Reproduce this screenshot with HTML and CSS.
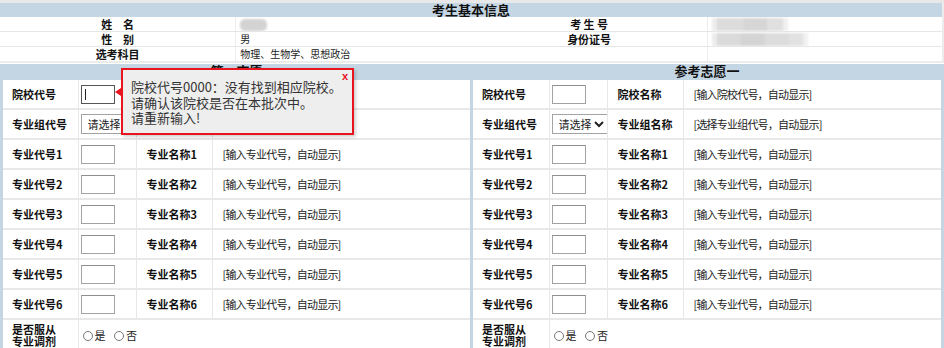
FILE: index.html
```html
<!DOCTYPE html>
<html lang="zh-CN">
<head>
  <meta charset="UTF-8">
  <title>考生基本信息</title>
  <link rel="stylesheet" href="styles.css">
</head>
<body>

  <table class="info">
    <tr>
      <th colspan="4" class="band">考生基本信息</th>
    </tr>
    <tr>
      <td class="key">姓　名</td>
      <td class="val"><span class="blur blur-name"></span></td>
      <td class="key">考 生 号</td>
      <td class="val"><span class="blur blur-no"></span></td>
    </tr>
    <tr>
      <td class="key">性　别</td>
      <td class="val">男</td>
      <td class="key">身份证号</td>
      <td class="val"><span class="blur blur-id"></span></td>
    </tr>
    <tr>
      <td class="key">选考科目</td>
      <td class="val">物理、生物学、思想政治</td>
      <td class="key"></td>
      <td class="val"></td>
    </tr>
  </table>

  <div class="wishes">
    <div class="panel panel-left">
      <table class="wish">
        <colgroup>
          <col class="c-label"><col class="c-input"><col class="c-name"><col>
        </colgroup>
        <tr><th colspan="4" class="band">第一志愿</th></tr>
        <tr>
          <td class="label">院校代号</td>
          <td class="field"><input type="text" class="code focused"></td>
          <td class="label name">院校名称</td>
          <td class="hint">[输入院校代号，自动显示]</td>
        </tr>
        <tr>
          <td class="label">专业组代号</td>
          <td class="field"><select class="group"><option>请选择</option></select></td>
          <td class="label name">专业组名称</td>
          <td class="hint">[选择专业组代号，自动显示]</td>
        </tr>
        <tr><td class="label">专业代号1</td><td class="field"><input type="text" class="code"></td><td class="label name">专业名称1</td><td class="hint">[输入专业代号，自动显示]</td></tr>
        <tr><td class="label">专业代号2</td><td class="field"><input type="text" class="code"></td><td class="label name">专业名称2</td><td class="hint">[输入专业代号，自动显示]</td></tr>
        <tr><td class="label">专业代号3</td><td class="field"><input type="text" class="code"></td><td class="label name">专业名称3</td><td class="hint">[输入专业代号，自动显示]</td></tr>
        <tr><td class="label">专业代号4</td><td class="field"><input type="text" class="code"></td><td class="label name">专业名称4</td><td class="hint">[输入专业代号，自动显示]</td></tr>
        <tr><td class="label">专业代号5</td><td class="field"><input type="text" class="code"></td><td class="label name">专业名称5</td><td class="hint">[输入专业代号，自动显示]</td></tr>
        <tr><td class="label">专业代号6</td><td class="field"><input type="text" class="code"></td><td class="label name">专业名称6</td><td class="hint">[输入专业代号，自动显示]</td></tr>
        <tr class="last">
          <td class="label two">是否服从<br>专业调剂</td>
          <td colspan="3" class="radios">
            <label><input type="radio" name="adj1">是</label>
            <label><input type="radio" name="adj1">否</label>
          </td>
        </tr>
      </table>

      <div class="tip">
        <span class="tip-close">x</span>
        院校代号0000：没有找到相应院校。<br>
        请确认该院校是否在本批次中。<br>
        请重新输入!
      </div>
    </div>

    <div class="panel panel-right">
      <table class="wish">
        <colgroup>
          <col class="c-label"><col class="c-input"><col class="c-name"><col>
        </colgroup>
        <tr><th colspan="4" class="band">参考志愿一</th></tr>
        <tr>
          <td class="label">院校代号</td>
          <td class="field"><input type="text" class="code"></td>
          <td class="label name">院校名称</td>
          <td class="hint">[输入院校代号，自动显示]</td>
        </tr>
        <tr>
          <td class="label">专业组代号</td>
          <td class="field"><select class="group"><option>请选择</option></select></td>
          <td class="label name">专业组名称</td>
          <td class="hint">[选择专业组代号，自动显示]</td>
        </tr>
        <tr><td class="label">专业代号1</td><td class="field"><input type="text" class="code"></td><td class="label name">专业名称1</td><td class="hint">[输入专业代号，自动显示]</td></tr>
        <tr><td class="label">专业代号2</td><td class="field"><input type="text" class="code"></td><td class="label name">专业名称2</td><td class="hint">[输入专业代号，自动显示]</td></tr>
        <tr><td class="label">专业代号3</td><td class="field"><input type="text" class="code"></td><td class="label name">专业名称3</td><td class="hint">[输入专业代号，自动显示]</td></tr>
        <tr><td class="label">专业代号4</td><td class="field"><input type="text" class="code"></td><td class="label name">专业名称4</td><td class="hint">[输入专业代号，自动显示]</td></tr>
        <tr><td class="label">专业代号5</td><td class="field"><input type="text" class="code"></td><td class="label name">专业名称5</td><td class="hint">[输入专业代号，自动显示]</td></tr>
        <tr><td class="label">专业代号6</td><td class="field"><input type="text" class="code"></td><td class="label name">专业名称6</td><td class="hint">[输入专业代号，自动显示]</td></tr>
        <tr class="last">
          <td class="label two">是否服从<br>专业调剂</td>
          <td colspan="3" class="radios">
            <label><input type="radio" name="adj2">是</label>
            <label><input type="radio" name="adj2">否</label>
          </td>
        </tr>
      </table>
    </div>
  </div>

</body>
</html>
```

FILE: styles.css
```css
body {
  margin: 0;
  background: #fff;
  font-family: "Noto Sans CJK SC", "Liberation Sans", sans-serif;
  color: #111;
}

table {
  border-collapse: collapse;
  width: 100%;
  table-layout: fixed;
}

td, th {
  padding: 0;
}

.band {
  background: #c4d6e4;
  font-size: 13px;
  font-weight: bold;
  text-align: center;
  color: #111;
}

/* basic info */

.info {
  border-top: 3px solid #e8e8e8;
  border-right: 2px solid #ececec;
}

.info .band {
  height: 14px;
  line-height: 14px;
}

.info td {
  height: 14px;
  line-height: 14px;
  border-bottom: 1px solid #e6e6e6;
  font-size: 11px;
  overflow: hidden;
}

.info tr:last-child td {
  height: 13px;
  border-bottom: 2px solid #ececec;
}

.info .key {
  text-align: center;
  font-weight: bold;
}

.info .val {
  padding-left: 4px;
  font-size: 10px;
  border-left: 1px solid #ededed;
  color: #222;
}

.blur {
  display: block;
  height: 12px;
  margin-top: 1px;
  filter: blur(1.2px);
}

.blur-name {
  width: 27px;
  border-radius: 5px;
  background: #d3d3d3;
}

.blur-no {
  width: 76px;
  height: 13px;
  background: linear-gradient(90deg, #ececec 0 6%, #dcdcdc 6% 42%, #d6d6d6 42% 72%, #e0e0e0 72% 93%, #f0f0f0 93%);
}

.blur-id {
  width: 96px;
  height: 13px;
  background: linear-gradient(90deg, #ececec 0 5%, #dadada 5% 30%, #d4d4d4 30% 55%, #dcdcdc 55% 80%, #e2e2e2 80% 95%, #f0f0f0 95%);
}

/* wish panels */

.wishes {
  display: flex;
  margin-top: 1px;
}

.panel {
  position: relative;
  border-left: 3px solid #c4d6e4;
}

.panel-left {
  width: 467px;
}

.panel-right {
  flex: 1;
  border-right: 3px solid #c4d6e4;
}

.wish .band {
  height: 16px;
  line-height: 14px;
  vertical-align: top;
}

.c-label { width: 75px; }
.c-input { width: 58px; }
.c-name { width: 76px; }

.panel-right .c-label { width: 76px; }

.wish td {
  height: 28px;
  border-bottom: 2px solid #e8e8e8;
  border-left: 1px solid #e8e8e8;
  font-size: 11px;
}

.wish td:first-child {
  border-left: none;
}

.label {
  padding-left: 9px;
  font-weight: bold;
  white-space: nowrap;
}

.label.name {
  padding-left: 10px;
}

.field {
  padding-left: 2px;
}

.hint {
  padding-left: 10px;
  font-size: 10px;
  letter-spacing: -0.8px;
  color: #222;
  white-space: nowrap;
}

.code {
  display: block;
  box-sizing: border-box;
  width: 34px;
  height: 19px;
  margin: 0;
  border: 1px solid #a3a3a3;
  border-top-color: #8e8e8e;
  background: #fff;
  outline: none;
}

.code.focused {
  border-color: #555;
  background: linear-gradient(#222, #222) no-repeat 3px 3px / 1px 11px, #fff;
}

.group {
  display: block;
  width: 56px;
  height: 20px;
  margin: 0;
  padding: 0 0 0 2px;
  border: 1px solid #a3a3a3;
  border-radius: 0;
  background: #fff;
  font-family: "Noto Sans CJK SC", sans-serif;
  font-size: 11px;
  color: #222;
}

.wish .last td {
  height: 30px;
  border-bottom: none;
}

.label.two {
  line-height: 12px;
}

.radios {
  padding-left: 4px;
  font-size: 11px;
  color: #222;
}

.radios label {
  margin-right: 6px;
}

.radios input {
  width: 10px;
  height: 10px;
  margin: 0 2px 0 0;
  vertical-align: -1px;
}

/* error tooltip */

.tip {
  position: absolute;
  left: 118px;
  top: 4px;
  width: 215px;
  height: 49px;
  padding: 9px 6px 5px 8px;
  background: #eeeeee;
  border: 2px solid #e8141e;
  box-shadow: 2px 2px 3px rgba(0, 0, 0, 0.18);
  font-size: 13px;
  line-height: 15.5px;
  color: #333;
}

.tip::before {
  content: "";
  position: absolute;
  left: -8px;
  top: 18px;
  border-style: solid;
  border-width: 4px 6px 4px 0;
  border-color: transparent #e8141e transparent transparent;
}

.tip-close {
  position: absolute;
  right: 4px;
  top: 1px;
  font-family: "Liberation Sans", sans-serif;
  font-size: 11px;
  font-weight: bold;
  line-height: 11px;
  color: #e8141e;
}
```
